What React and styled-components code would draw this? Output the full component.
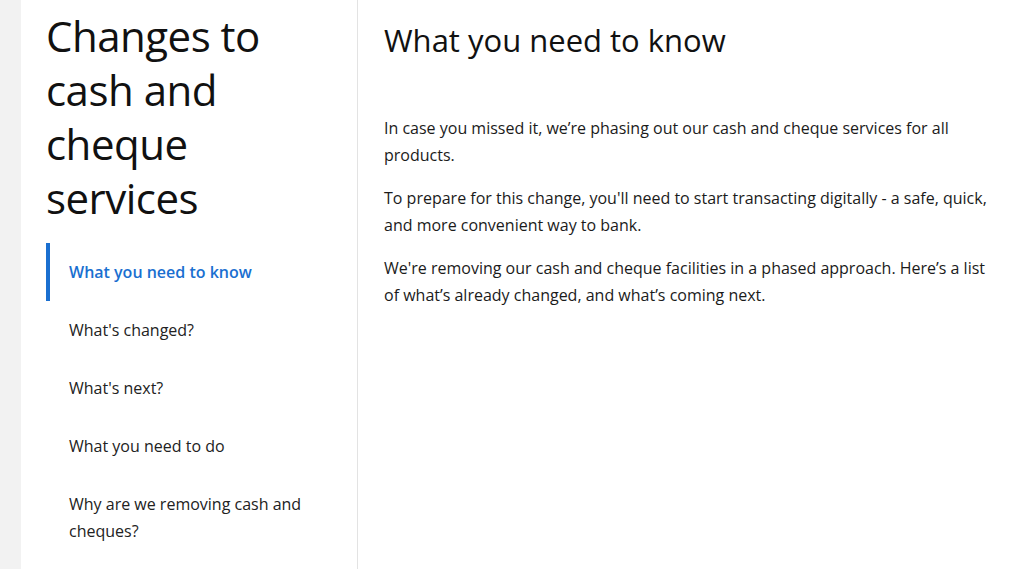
import React from 'react';
import styled, { createGlobalStyle } from 'styled-components';

const GlobalStyle = createGlobalStyle`
  html, body {
    margin: 0;
    padding: 0;
    background: #f2f2f2;
  }
  body {
    font-family: "Open Sans", "Noto Sans", sans-serif;
    color: #1b1b1b;
  }
`;

const navItems = [
  { label: 'What you need to know', active: true },
  { label: "What's changed?" },
  { label: "What's next?" },
  { label: 'What you need to do' },
  { label: 'Why are we removing cash and cheques?' },
];

function App() {
  return (
    <>
      <GlobalStyle />
      <Page>
        <Sidebar>
          <Title>Changes to cash and cheque services</Title>
          <Nav>
            {navItems.map((item) => (
              <NavItem key={item.label} $active={item.active}>
                {item.label}
              </NavItem>
            ))}
          </Nav>
        </Sidebar>
        <Content>
          <Heading>What you need to know</Heading>
          <Text>
            In case you missed it, we’re phasing out our cash and cheque services for all
            products.
          </Text>
          <Text>
            To prepare for this change, you'll need to start transacting digitally - a safe,
            quick, and more convenient way to bank.
          </Text>
          <Text>
            We're removing our cash and cheque facilities in a phased approach. Here’s a list
            of what’s already changed, and what’s coming next.
          </Text>
        </Content>
      </Page>
    </>
  );
}

const Page = styled.div`
  display: flex;
  margin-left: 21px;
  min-height: 569px;
  background: #fff;
`;

const Sidebar = styled.aside`
  width: 311px;
  flex-shrink: 0;
  padding: 9px 0 0 25px;
  border-right: 1px solid #e3e3e3;
`;

const Title = styled.h1`
  margin: 0 0 18px;
  font-size: 42px;
  font-weight: 400;
  line-height: 54px;
  letter-spacing: -0.5px;
  color: #111;
  width: 260px;
`;

const Nav = styled.ul`
  list-style: none;
  margin: 0;
  padding: 0;
`;

const NavItem = styled.li`
  padding: 16px 40px 15px 19px;
  font-size: 16px;
  line-height: 27px;
  border-left: 4px solid ${(p) => (p.$active ? '#1a6fd0' : 'transparent')};
  color: ${(p) => (p.$active ? '#1a6fd0' : '#222')};
  font-weight: ${(p) => (p.$active ? 600 : 400)};
`;

const Content = styled.main`
  flex: 1;
  padding: 20px 20px 0 26px;
`;

const Heading = styled.h2`
  margin: 0 0 55px;
  font-size: 31px;
  font-weight: 400;
  line-height: 40px;
  color: #111;
`;

const Text = styled.p`
  margin: 0 0 16px;
  max-width: 625px;
  font-size: 16px;
  line-height: 27px;
  color: #1b1b1b;
`;

export default App;
